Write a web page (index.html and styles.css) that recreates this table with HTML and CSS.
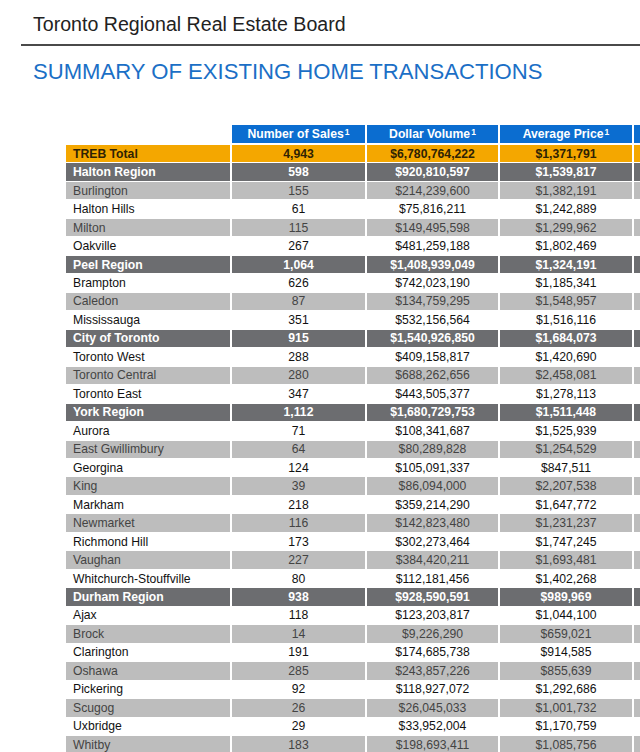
FILE: index.html
```html
<!DOCTYPE html>
<html>
<head>
<meta charset="utf-8">
<link rel="stylesheet" href="styles.css">
</head>
<body>
<div class="page">
  <div class="board">Toronto Regional Real Estate Board</div>
  <div class="rule"></div>
  <h1 class="heading">SUMMARY OF EXISTING HOME TRANSACTIONS</h1>
  <div class="table">
    <div class="row head">
      <div class="c blank"></div>
      <div class="c">Number of Sales<sup>1</sup></div>
      <div class="c">Dollar Volume<sup>1</sup></div>
      <div class="c">Average Price<sup>1</sup></div>
      <div class="c"></div>
    </div>
    <div class="row total"><div class="c name">TREB Total</div><div class="c">4,943</div><div class="c">$6,780,764,222</div><div class="c">$1,371,791</div><div class="c"></div></div>
    <div class="row region"><div class="c name">Halton Region</div><div class="c">598</div><div class="c">$920,810,597</div><div class="c">$1,539,817</div><div class="c"></div></div>
    <div class="row light"><div class="c name">Burlington</div><div class="c">155</div><div class="c">$214,239,600</div><div class="c">$1,382,191</div><div class="c"></div></div>
    <div class="row plain"><div class="c name">Halton Hills</div><div class="c">61</div><div class="c">$75,816,211</div><div class="c">$1,242,889</div><div class="c"></div></div>
    <div class="row light"><div class="c name">Milton</div><div class="c">115</div><div class="c">$149,495,598</div><div class="c">$1,299,962</div><div class="c"></div></div>
    <div class="row plain"><div class="c name">Oakville</div><div class="c">267</div><div class="c">$481,259,188</div><div class="c">$1,802,469</div><div class="c"></div></div>
    <div class="row region"><div class="c name">Peel Region</div><div class="c">1,064</div><div class="c">$1,408,939,049</div><div class="c">$1,324,191</div><div class="c"></div></div>
    <div class="row plain"><div class="c name">Brampton</div><div class="c">626</div><div class="c">$742,023,190</div><div class="c">$1,185,341</div><div class="c"></div></div>
    <div class="row light"><div class="c name">Caledon</div><div class="c">87</div><div class="c">$134,759,295</div><div class="c">$1,548,957</div><div class="c"></div></div>
    <div class="row plain"><div class="c name">Mississauga</div><div class="c">351</div><div class="c">$532,156,564</div><div class="c">$1,516,116</div><div class="c"></div></div>
    <div class="row region"><div class="c name">City of Toronto</div><div class="c">915</div><div class="c">$1,540,926,850</div><div class="c">$1,684,073</div><div class="c"></div></div>
    <div class="row plain"><div class="c name">Toronto West</div><div class="c">288</div><div class="c">$409,158,817</div><div class="c">$1,420,690</div><div class="c"></div></div>
    <div class="row light"><div class="c name">Toronto Central</div><div class="c">280</div><div class="c">$688,262,656</div><div class="c">$2,458,081</div><div class="c"></div></div>
    <div class="row plain"><div class="c name">Toronto East</div><div class="c">347</div><div class="c">$443,505,377</div><div class="c">$1,278,113</div><div class="c"></div></div>
    <div class="row region"><div class="c name">York Region</div><div class="c">1,112</div><div class="c">$1,680,729,753</div><div class="c">$1,511,448</div><div class="c"></div></div>
    <div class="row plain"><div class="c name">Aurora</div><div class="c">71</div><div class="c">$108,341,687</div><div class="c">$1,525,939</div><div class="c"></div></div>
    <div class="row light"><div class="c name">East Gwillimbury</div><div class="c">64</div><div class="c">$80,289,828</div><div class="c">$1,254,529</div><div class="c"></div></div>
    <div class="row plain"><div class="c name">Georgina</div><div class="c">124</div><div class="c">$105,091,337</div><div class="c">$847,511</div><div class="c"></div></div>
    <div class="row light"><div class="c name">King</div><div class="c">39</div><div class="c">$86,094,000</div><div class="c">$2,207,538</div><div class="c"></div></div>
    <div class="row plain"><div class="c name">Markham</div><div class="c">218</div><div class="c">$359,214,290</div><div class="c">$1,647,772</div><div class="c"></div></div>
    <div class="row light"><div class="c name">Newmarket</div><div class="c">116</div><div class="c">$142,823,480</div><div class="c">$1,231,237</div><div class="c"></div></div>
    <div class="row plain"><div class="c name">Richmond Hill</div><div class="c">173</div><div class="c">$302,273,464</div><div class="c">$1,747,245</div><div class="c"></div></div>
    <div class="row light"><div class="c name">Vaughan</div><div class="c">227</div><div class="c">$384,420,211</div><div class="c">$1,693,481</div><div class="c"></div></div>
    <div class="row plain"><div class="c name">Whitchurch-Stouffville</div><div class="c">80</div><div class="c">$112,181,456</div><div class="c">$1,402,268</div><div class="c"></div></div>
    <div class="row region"><div class="c name">Durham Region</div><div class="c">938</div><div class="c">$928,590,591</div><div class="c">$989,969</div><div class="c"></div></div>
    <div class="row plain"><div class="c name">Ajax</div><div class="c">118</div><div class="c">$123,203,817</div><div class="c">$1,044,100</div><div class="c"></div></div>
    <div class="row light"><div class="c name">Brock</div><div class="c">14</div><div class="c">$9,226,290</div><div class="c">$659,021</div><div class="c"></div></div>
    <div class="row plain"><div class="c name">Clarington</div><div class="c">191</div><div class="c">$174,685,738</div><div class="c">$914,585</div><div class="c"></div></div>
    <div class="row light"><div class="c name">Oshawa</div><div class="c">285</div><div class="c">$243,857,226</div><div class="c">$855,639</div><div class="c"></div></div>
    <div class="row plain"><div class="c name">Pickering</div><div class="c">92</div><div class="c">$118,927,072</div><div class="c">$1,292,686</div><div class="c"></div></div>
    <div class="row light"><div class="c name">Scugog</div><div class="c">26</div><div class="c">$26,045,033</div><div class="c">$1,001,732</div><div class="c"></div></div>
    <div class="row plain"><div class="c name">Uxbridge</div><div class="c">29</div><div class="c">$33,952,004</div><div class="c">$1,170,759</div><div class="c"></div></div>
    <div class="row light"><div class="c name">Whitby</div><div class="c">183</div><div class="c">$198,693,411</div><div class="c">$1,085,756</div><div class="c"></div></div>
  </div>
</div>
</body>
</html>
```
FILE: styles.css
```css
html, body {
  margin: 0;
  padding: 0;
  background: #ffffff;
  overflow: hidden;
}
.page {
  width: 640px;
  height: 752px;
  overflow: hidden;
  font-family: "Liberation Sans", Arial, sans-serif;
}
.board {
  margin: 12px 0 0 33px;
  font-size: 19.6px;
  line-height: 24px;
  color: #222222;
}
.rule {
  margin: 8px 0 0 21px;
  height: 2px;
  background: #4a4a4a;
}
.heading {
  margin: 13px 0 0 33px;
  font-size: 22.1px;
  line-height: 26px;
  font-weight: normal;
  color: #1b6fc6;
}
.table {
  margin: 40px 0 0 66px;
  display: flex;
  flex-direction: column;
  gap: 1px;
  width: 700px;
}
.row {
  display: grid;
  grid-template-columns: 164px 133px 131px 132px 132px;
  column-gap: 2px;
  height: 17.47px;
  font-size: 12.2px;
}
.c {
  display: flex;
  align-items: center;
  justify-content: center;
  white-space: nowrap;
}
.c.name {
  justify-content: flex-start;
  padding-left: 7px;
}
.head {
  height: 18px;
  margin-bottom: 1px;
}
.head .c {
  background: #0b6dd0;
  color: #ffffff;
  font-weight: bold;
}
.head .c.blank {
  background: transparent;
}
sup {
  font-size: 8.5px;
  line-height: 0;
  margin-left: 1px;
  position: relative;
  top: -2px;
}
.total .c {
  background: #f4a700;
  color: #2e2204;
  font-weight: bold;
}
.region .c {
  background: #6c6d70;
  color: #ffffff;
  font-weight: bold;
}
.light .c {
  background: #bdbdbd;
  color: #444444;
}
.plain .c {
  background: #ffffff;
  color: #111111;
}
```
